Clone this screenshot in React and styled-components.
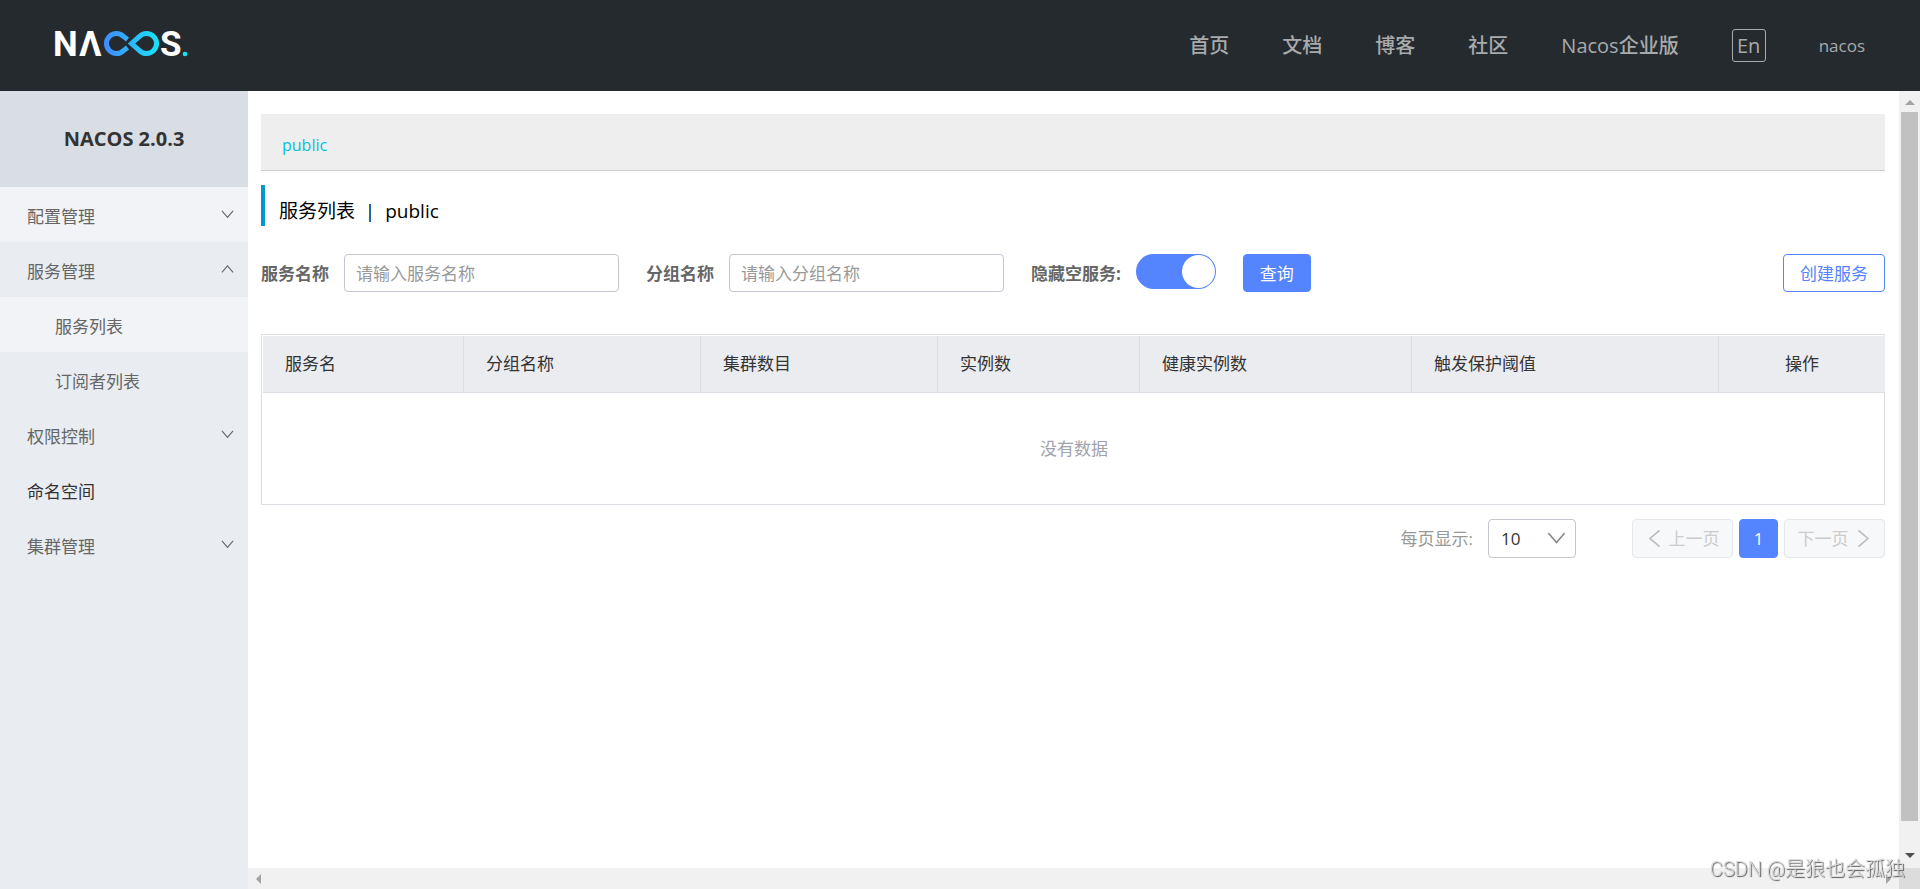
import React, { useState } from "react";
import styled, { createGlobalStyle } from "styled-components";

const GlobalStyle = createGlobalStyle`
  * {
    box-sizing: border-box;
  }
  body {
    margin: 0;
    background: #fff;
    color: #333;
    font-family: "Open Sans", "Noto Sans CJK SC", sans-serif;
    font-size: 17px;
    line-height: 24px;
  }
  button, input, select {
    font: inherit;
  }
  a {
    color: inherit;
    text-decoration: none;
  }
`;

const Page = styled.div`
  display: flex;
  flex-direction: column;
  min-height: 100vh;
`;

const Header = styled.header`
  display: flex;
  align-items: center;
  justify-content: space-between;
  height: 91px;
  padding: 0 55px 0 51px;
  background: #252a2f;
`;

const LogoLink = styled.a`
  display: flex;
  margin-top: -4px;
`;

const TopNav = styled.nav`
  display: flex;
  align-items: center;
  gap: 53px;
  color: #a8aaac;
  font-size: 20px;
  font-weight: 500;
  line-height: 28px;
`;

const LangButton = styled.button`
  width: 34px;
  height: 33px;
  padding: 0;
  border: 1px solid #a8aaac;
  border-radius: 3px;
  background: transparent;
  color: inherit;
  line-height: 28px;
`;

const UserLink = styled.a`
  font-size: 17px;
`;

const Body = styled.div`
  display: flex;
  flex: 1;
`;

const Sidebar = styled.aside`
  flex: none;
  width: 248px;
  background: #e9edf1;
`;

const SidebarTitle = styled.h1`
  margin: 0;
  height: 96px;
  background: #d9dde4;
  font-size: 20px;
  font-weight: 700;
  line-height: 96px;
  text-align: center;
`;

const MenuList = styled.ul`
  margin: 0;
  padding: 0;
  list-style: none;
`;

const MenuButton = styled.button`
  display: flex;
  align-items: center;
  justify-content: space-between;
  width: 100%;
  height: 55px;
  padding: 0 14px 0 27px;
  border: 0;
  background: ${(props) => (props.$light ? "#f1f3f7" : "transparent")};
  color: #666;
  text-align: left;
`;

const MenuText = styled.span`
  padding-top: 4px;
`;

const MenuLink = styled.a`
  display: flex;
  align-items: center;
  height: 55px;
  padding-left: ${(props) => (props.$nested ? "55px" : "27px")};
  background: ${(props) => (props.$light ? "#f1f3f7" : "transparent")};
  color: ${(props) => (props.$nested ? "#666" : "#333")};
`;

const Viewport = styled.div`
  display: grid;
  flex: 1;
  min-width: 0;
  grid-template-columns: 1fr 21px;
  grid-template-rows: 1fr 21px;
`;

const Main = styled.main`
  min-width: 0;
  padding: 23px 14px 0 13px;
`;

const NamespaceBar = styled.div`
  display: flex;
  align-items: center;
  height: 57px;
  padding: 6px 21px 0;
  border-bottom: 1px solid #ccc;
  background: #eee;
  color: #00c1de;
  font-size: 16px;
`;

const PageTitle = styled.h2`
  height: 41px;
  margin: 14px 0 28px;
  padding: 12px 0 0 14px;
  border-left: 4px solid #09c;
  color: #000;
  font-size: 19px;
  font-weight: 400;
  line-height: 28px;
  white-space: pre;
`;

const FilterForm = styled.form`
  display: flex;
  align-items: flex-start;
  margin-bottom: 40px;
`;

const Field = styled.div`
  display: flex;
  margin-right: 27px;
`;

const FieldLabel = styled.label`
  margin-right: 15px;
  color: #666;
  font-weight: 700;
  line-height: 40px;
`;

const TextInput = styled.input`
  width: 275px;
  height: 38px;
  padding: 1px 11px 0;
  border: 1px solid #c4c6cf;
  border-radius: 4px;
  outline: none;
  color: #333;
  &::placeholder {
    color: #999;
  }
`;

const Switch = styled.input`
  appearance: none;
  width: 80px;
  height: 35px;
  margin: 0;
  padding: 1px;
  border-radius: 18px;
  background: ${(props) => (props.checked ? "#5584ff" : "#c4c6cf")};
  &::before {
    content: "";
    display: block;
    width: 33px;
    height: 33px;
    margin-left: ${(props) => (props.checked ? "auto" : "0")};
    border-radius: 50%;
    background: #fff;
  }
`;

const Button = styled.button`
  height: 38px;
  padding: 1px 16px 0;
  border: 1px solid #5584ff;
  border-radius: 4px;
  background: ${(props) => (props.$primary ? "#5584ff" : "#fff")};
  color: ${(props) => (props.$primary ? "#fff" : "#5584ff")};
`;

const CreateButton = styled(Button)`
  margin-left: auto;
`;

const TableFrame = styled.div`
  padding: 1px 0 0 1px;
  border: 1px solid #dcdee3;
`;

const Table = styled.table`
  width: 100%;
  border-collapse: separate;
  border-spacing: 0;
  table-layout: fixed;
`;

const HeadCell = styled.th`
  width: ${(props) => props.$width};
  height: 57px;
  padding: 0 22px;
  border-right: 1px solid #dcdee3;
  border-bottom: 1px solid #dcdee3;
  background: #ebecf0;
  font-weight: 400;
  text-align: ${(props) => props.$align || "left"};
  &:last-child {
    border-right: 0;
  }
`;

const EmptyCell = styled.td`
  height: 111px;
  padding: 0;
  color: #a0a2ad;
  text-align: center;
`;

const PagerRow = styled.div`
  display: flex;
  align-items: center;
  justify-content: flex-end;
  margin-top: 14px;
`;

const PageSizeLabel = styled.label`
  margin-right: 15px;
  color: #999;
`;

const SelectBox = styled.div`
  position: relative;
  width: 88px;
  margin-right: 56px;
  svg {
    position: absolute;
    top: 10px;
    right: 10px;
    pointer-events: none;
  }
`;

const Select = styled.select`
  appearance: none;
  display: block;
  width: 100%;
  height: 39px;
  padding: 0 12px;
  border: 1px solid #c4c6cf;
  border-radius: 4px;
  background: #fff;
  color: #333;
`;

const Pagination = styled.nav`
  display: flex;
  gap: 6px;
`;

const PageButton = styled.button`
  display: flex;
  align-items: center;
  justify-content: center;
  gap: 4px;
  width: ${(props) => (props.$current ? "39px" : "101px")};
  height: 39px;
  padding: 0;
  border: 1px solid ${(props) => (props.$current ? "#5584ff" : "#e6e7eb")};
  border-radius: 4px;
  background: ${(props) => (props.$current ? "#5584ff" : "#f7f8fa")};
  color: ${(props) => (props.$current ? "#fff" : "#ccc")};
`;

const VerticalTrack = styled.div`
  display: flex;
  flex-direction: column;
  align-items: center;
  padding: 7px 0;
  background: #f1f1f1;
`;

const VerticalThumb = styled.div`
  flex: 1;
  width: 17px;
  margin: 4px 0 30px;
  background: #c1c1c1;
`;

const HorizontalTrack = styled.div`
  display: flex;
  align-items: center;
  justify-content: space-between;
  padding: 0 8px;
  background: #f1f1f1;
`;

const TrackCorner = styled.div`
  background: #dcdcdc;
`;

const Watermark = styled.div`
  position: fixed;
  right: 15px;
  bottom: 6px;
  color: #d8d8d8;
  font-family: Roboto, "Noto Sans CJK SC", sans-serif;
  font-size: 20px;
  font-weight: 300;
  line-height: 28px;
  text-shadow: 1px 1px 1px #555;
`;

const Logo = () => (
  <svg width="142" height="50" viewBox="-4 -12 142 50" role="img" aria-label="NACOS">
    <defs>
      <linearGradient id="loop" gradientUnits="userSpaceOnUse" x1="49" y1="0" x2="104" y2="0">
        <stop offset="0" stopColor="#4189ff" />
        <stop offset="1" stopColor="#17e4f8" />
      </linearGradient>
    </defs>
    <g fill="#fff" fontFamily="Roboto" fontSize="35" fontWeight="700">
      <text x="-2" y="25">N</text>
      <text x="24" y="25">Λ</text>
      <text x="105" y="25">S</text>
    </g>
    <g fill="none" stroke="url(#loop)" strokeWidth="5">
      <path d="M72.5 8.5L68.5 5.4A10 10 0 1 0 68.5 19.6L72.5 16.5" />
      <path d="M76.5 12.5L84.5 5.4A10 10 0 1 1 84.5 19.6Z" />
    </g>
    <circle cx="130" cy="23" r="2.3" fill="#17e4f8" />
  </svg>
);

const chevrons = {
  down: "M1 3L7 10L13 3",
  up: "M1 10L7 3L13 10",
  left: "M10 1L3 7L10 13",
  right: "M4 1L11 7L4 13",
};

const Chevron = ({ dir, size, color }) => (
  <svg width={size} height={size} viewBox="0 0 14 14" aria-hidden="true">
    <path d={chevrons[dir]} fill="none" stroke={color} strokeWidth="1.2" />
  </svg>
);

const Arrow = ({ points, dark }) => (
  <svg width="10" height="10" viewBox="0 0 10 10" aria-hidden="true">
    <polygon points={points} fill={dark ? "#505050" : "#a3a3a3"} />
  </svg>
);

const navLinks = ["首页", "文档", "博客", "社区", "Nacos企业版"];

const columns = [
  { title: "服务名", width: "201px" },
  { title: "分组名称", width: "237px" },
  { title: "集群数目", width: "237px" },
  { title: "实例数", width: "202px" },
  { title: "健康实例数", width: "272px" },
  { title: "触发保护阈值", width: "307px" },
  { title: "操作", width: "166px", align: "center" },
];

const SubMenu = ({ title, light, open }) => (
  <MenuButton type="button" $light={light} aria-expanded={!!open}>
    <MenuText>{title}</MenuText>
    <Chevron dir={open ? "up" : "down"} size={13} color="#666" />
  </MenuButton>
);

const App = () => {
  const [hideEmpty, setHideEmpty] = useState(true);

  return (
    <Page>
      <GlobalStyle />
      <Header>
        <LogoLink href="#home">
          <Logo />
        </LogoLink>
        <TopNav>
          {navLinks.map((name) => (
            <a key={name} href="#nav">
              {name}
            </a>
          ))}
          <LangButton type="button">En</LangButton>
          <UserLink href="#user">nacos</UserLink>
        </TopNav>
      </Header>

      <Body>
        <Sidebar>
          <SidebarTitle>NACOS 2.0.3</SidebarTitle>
          <MenuList>
            <li>
              <SubMenu title="配置管理" light />
            </li>
            <li>
              <SubMenu title="服务管理" open />
              <MenuList>
                <li>
                  <MenuLink href="#services" $nested $light>
                    <MenuText>服务列表</MenuText>
                  </MenuLink>
                </li>
                <li>
                  <MenuLink href="#subscribers" $nested>
                    <MenuText>订阅者列表</MenuText>
                  </MenuLink>
                </li>
              </MenuList>
            </li>
            <li>
              <SubMenu title="权限控制" />
            </li>
            <li>
              <MenuLink href="#namespace">
                <MenuText>命名空间</MenuText>
              </MenuLink>
            </li>
            <li>
              <SubMenu title="集群管理" />
            </li>
          </MenuList>
        </Sidebar>

        <Viewport>
          <Main>
            <NamespaceBar>
              <a href="#public">public</a>
            </NamespaceBar>
            <PageTitle>{"服务列表  |  public"}</PageTitle>

            <FilterForm onSubmit={(e) => e.preventDefault()}>
              <Field>
                <FieldLabel htmlFor="serviceName">服务名称</FieldLabel>
                <TextInput id="serviceName" placeholder="请输入服务名称" />
              </Field>
              <Field>
                <FieldLabel htmlFor="groupName">分组名称</FieldLabel>
                <TextInput id="groupName" placeholder="请输入分组名称" />
              </Field>
              <Field>
                <FieldLabel htmlFor="hideEmpty">隐藏空服务:</FieldLabel>
                <Switch
                  id="hideEmpty"
                  type="checkbox"
                  role="switch"
                  checked={hideEmpty}
                  onChange={(e) => setHideEmpty(e.target.checked)}
                />
              </Field>
              <Button type="submit" $primary>
                查询
              </Button>
              <CreateButton type="button">创建服务</CreateButton>
            </FilterForm>

            <TableFrame>
              <Table>
                <thead>
                  <tr>
                    {columns.map((col) => (
                      <HeadCell key={col.title} $width={col.width} $align={col.align}>
                        {col.title}
                      </HeadCell>
                    ))}
                  </tr>
                </thead>
                <tbody>
                  <tr>
                    <EmptyCell colSpan={columns.length}>没有数据</EmptyCell>
                  </tr>
                </tbody>
              </Table>
            </TableFrame>

            <PagerRow>
              <PageSizeLabel htmlFor="pageSize">每页显示:</PageSizeLabel>
              <SelectBox>
                <Select id="pageSize" defaultValue="10">
                  <option>10</option>
                  <option>20</option>
                  <option>50</option>
                </Select>
                <Chevron dir="down" size={19} color="#888" />
              </SelectBox>
              <Pagination>
                <PageButton type="button" disabled>
                  <Chevron dir="left" size={19} color="#bbb" />
                  上一页
                </PageButton>
                <PageButton type="button" $current>
                  1
                </PageButton>
                <PageButton type="button" disabled>
                  下一页
                  <Chevron dir="right" size={19} color="#bbb" />
                </PageButton>
              </Pagination>
            </PagerRow>
          </Main>
          <VerticalTrack>
            <Arrow points="5,2 10,7 0,7" />
            <VerticalThumb />
            <Arrow points="0,2 10,2 5,7" dark />
          </VerticalTrack>
          <HorizontalTrack>
            <Arrow points="0,5 5,0 5,10" />
            <Arrow points="10,5 5,0 5,10" />
          </HorizontalTrack>
          <TrackCorner />
        </Viewport>
      </Body>
      <Watermark>CSDN @是狼也会孤独</Watermark>
    </Page>
  );
};

export default App;
